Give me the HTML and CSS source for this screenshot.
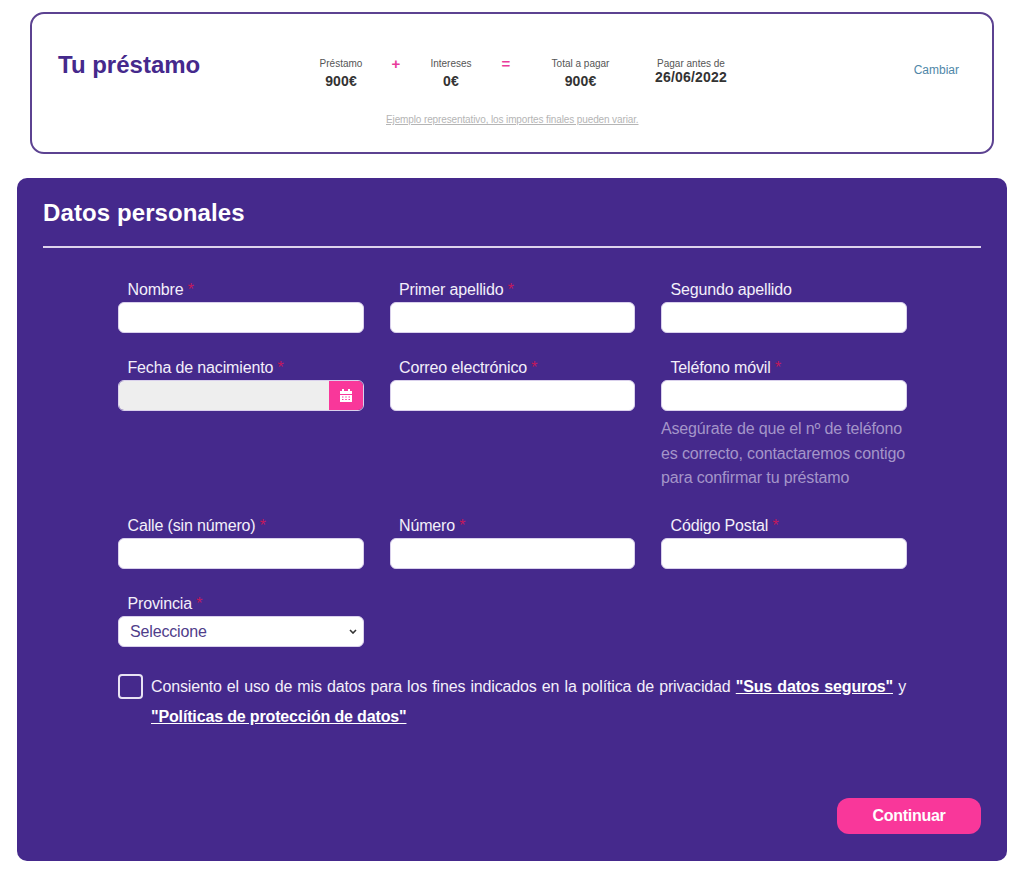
FILE: index.html
```html
<!DOCTYPE html>
<html lang="es">
<head>
    <meta charset="utf-8">
    <title>Tu préstamo</title>
    <link rel="stylesheet" href="styles.css">
</head>
<body>
    <!-- Loan summary -->
    <div class="loanBox">
        <div class="loanTop">
            <h1 class="loanTitle">Tu préstamo</h1>
            <div class="loanFigures">
                <div class="figure figAmount"><span class="figLabel">Préstamo</span><b class="figValue">900€</b></div>
                <span class="figSign signPlus">+</span>
                <div class="figure figInterest"><span class="figLabel">Intereses</span><b class="figValue">0€</b></div>
                <span class="figSign signEq">=</span>
                <div class="figure figTotal"><span class="figLabel">Total a pagar</span><b class="figValue">900€</b></div>
                <div class="figure figDate"><span class="figLabel">Pagar antes de</span><b class="figDateValue">26/06/2022</b></div>
            </div>
            <a class="changeLink" href="#">Cambiar</a>
        </div>
        <a class="loanNote" href="#">Ejemplo representativo, los importes finales pueden variar.</a>
    </div>

    <!-- Personal data form -->
    <form class="panel">
        <h2 class="panelTitle">Datos personales</h2>
        <div class="fields">
            <div class="field">
                <label class="fieldLabel">Nombre <span class="req">*</span></label>
                <input class="textInput" type="text">
            </div>
            <div class="field">
                <label class="fieldLabel">Primer apellido <span class="req">*</span></label>
                <input class="textInput" type="text">
            </div>
            <div class="field">
                <label class="fieldLabel">Segundo apellido</label>
                <input class="textInput" type="text">
            </div>
            <div class="field">
                <label class="fieldLabel">Fecha de nacimiento <span class="req">*</span></label>
                <div class="dateInput">
                    <div class="dateText"></div>
                    <div class="dateButton">
                        <svg width="12" height="13" viewBox="0 0 12 13">
                            <path fill="#fff" d="M2 0h2v2h4V0h2v2h2v3H0V2h2z"/>
                            <path fill="#fff" fill-rule="evenodd" d="M0 6h12v7H0zM2 7.500v1h1.500v-1zM5.250 7.500v1h1.500v-1zM8.500 7.500v1H10v-1zM2 10v1h1.500v-1zM5.250 10v1h1.500v-1zM8.500 10v1H10v-1z"/>
                        </svg>
                    </div>
                </div>
            </div>
            <div class="field">
                <label class="fieldLabel">Correo electrónico <span class="req">*</span></label>
                <input class="textInput" type="text">
            </div>
            <div class="field">
                <label class="fieldLabel">Teléfono móvil <span class="req">*</span></label>
                <input class="textInput" type="text">
                <p class="fieldHint">Asegúrate de que el nº de teléfono es correcto, contactaremos contigo para confirmar tu préstamo</p>
            </div>
            <div class="field">
                <label class="fieldLabel">Calle (sin número) <span class="req">*</span></label>
                <input class="textInput" type="text">
            </div>
            <div class="field">
                <label class="fieldLabel">Número <span class="req">*</span></label>
                <input class="textInput" type="text">
            </div>
            <div class="field">
                <label class="fieldLabel">Código Postal <span class="req">*</span></label>
                <input class="textInput" type="text">
            </div>
            <div class="field">
                <label class="fieldLabel">Provincia <span class="req">*</span></label>
                <div class="selectWrap">
                    <select class="selectInput">
                        <option>Seleccione</option>
                    </select>
                    <svg class="selectArrow" width="8" height="5" viewBox="0 0 8 5">
                        <path d="M1 1l3 3 3-3" fill="none" stroke="#333" stroke-width="1.600"/>
                    </svg>
                </div>
            </div>
        </div>
        <div class="consent">
            <span class="checkBox"></span>
            <p class="consentText">Consiento el uso de mis datos para los fines indicados en la política de privacidad <a href="#">"Sus datos seguros"</a> y <a href="#">"Políticas de protección de datos"</a></p>
        </div>
        <div class="panelFooter">
            <button class="continueButton" type="button">Continuar</button>
        </div>
    </form>
</body>
</html>
```

FILE: styles.css
```css
* {
    box-sizing: border-box;
}
body {
    margin: 0;
    padding: 12px 17px 15px;
    background-color: #fff;
    font-family: "Liberation Sans", Arial, sans-serif;
}
.loanBox {
    height: 142px;
    margin: 0 13px 24px;
    border: 2px solid #5c4291;
    border-radius: 14px;
    padding: 0 33px 0 26px;
}
.loanTop {
    display: flex;
    align-items: flex-start;
    height: 99px;
}
.loanTitle {
    width: 262px;
    margin: 34px 0 0;
    color: #45298c;
    font-size: 24px;
    line-height: 34px;
}
.loanFigures {
    display: flex;
    align-items: flex-start;
    width: 420px;
    margin-top: 43px;
    color: #333;
    white-space: nowrap;
}
.figure {
    display: flex;
    flex: none;
    flex-direction: column;
    align-items: center;
    text-align: center;
}
.figLabel {
    font-size: 10px;
    line-height: 13px;
    color: #555;
}
.figValue {
    font-size: 14px;
    letter-spacing: 0.100px;
    line-height: 19px;
    margin-top: 2px;
}
.figDateValue {
    font-size: 14px;
    letter-spacing: 0.200px;
    line-height: 14px;
}
.figSign {
    flex: none;
    color: #e93a9b;
    font-size: 15px;
    font-weight: bold;
    line-height: 14px;
    text-align: center;
}
.figAmount { width: 42px; }
.signPlus { width: 12px; margin-left: 28px; }
.figInterest { width: 40px; margin-left: 29px; }
.signEq { width: 12px; margin-left: 29px; }
.figTotal { width: 56px; margin-left: 40.500px; }
.figDate { width: 74px; margin-left: 45.500px; }
.changeLink {
    margin: 49px 0 0 auto;
    color: #4f87a8;
    font-size: 12px;
    line-height: 14px;
    text-decoration: none;
}
.loanNote {
    display: block;
    margin-left: 328px;
    color: #b5b5b5;
    font-size: 10px;
    letter-spacing: -0.120px;
    line-height: 14px;
}
.panel {
    height: 683px;
    padding: 0 26px;
    border-radius: 10px;
    background-color: #45298c;
    color: #fff;
}
.panelTitle {
    height: 70px;
    margin: 0;
    padding-top: 21px;
    border-bottom: 2px solid #ddd3ec;
    font-size: 24px;
    letter-spacing: 0.100px;
    line-height: 28px;
}
.fields {
    display: grid;
    grid-template-columns: repeat(3, 245.500px);
    column-gap: 26px;
    row-gap: 25px;
    margin: 32px 75px 0;
}
.fieldLabel {
    display: block;
    height: 22px;
    padding-left: 9.500px;
    font-size: 16px;
    letter-spacing: -0.150px;
    line-height: 19px;
    color: #f3effa;
}
.req {
    color: #c2185b;
}
.textInput {
    display: block;
    width: 100%;
    height: 31px;
    border: 1px solid #d9d0ec;
    border-radius: 6px;
    background-color: #fff;
}
.dateInput {
    display: flex;
    height: 31px;
    border: 1px solid #d9d0ec;
    border-radius: 6px;
    overflow: hidden;
}
.dateText {
    flex: 1;
    background-color: #eee;
}
.dateButton {
    display: flex;
    align-items: center;
    justify-content: center;
    width: 34px;
    background-color: #f9379a;
}
.fieldHint {
    margin: 6px 0 0;
    color: #a495c9;
    font-size: 16px;
    letter-spacing: -0.150px;
    line-height: 24.500px;
}
.selectWrap {
    position: relative;
}
.selectInput {
    display: block;
    width: 100%;
    height: 31px;
    padding-left: 11px;
    border: 1px solid #d9d0ec;
    border-radius: 6px;
    background-color: #fff;
    color: #4f3d8a;
    font-family: inherit;
    font-size: 16px;
    letter-spacing: -0.150px;
    appearance: none;
}
.selectArrow {
    position: absolute;
    top: 13px;
    right: 7px;
}
.consent {
    display: flex;
    gap: 8px;
    margin: 27px 75px 0;
}
.checkBox {
    flex: none;
    width: 25px;
    height: 25px;
    border: 2px solid #e8e2f3;
    border-radius: 4px;
}
.consentText {
    margin: -2px 0 0;
    font-size: 16px;
    letter-spacing: -0.150px;
    line-height: 30px;
    text-align: justify;
    color: #f3effa;
}
.consentText a {
    color: #fff;
    font-weight: bold;
}
.panelFooter {
    display: flex;
    justify-content: flex-end;
    margin-top: 66px;
}
.continueButton {
    width: 144px;
    height: 36px;
    border: none;
    border-radius: 12px;
    background-color: #f9379a;
    color: #fff;
    font-family: inherit;
    font-size: 16px;
    letter-spacing: -0.300px;
    font-weight: bold;
}
```
